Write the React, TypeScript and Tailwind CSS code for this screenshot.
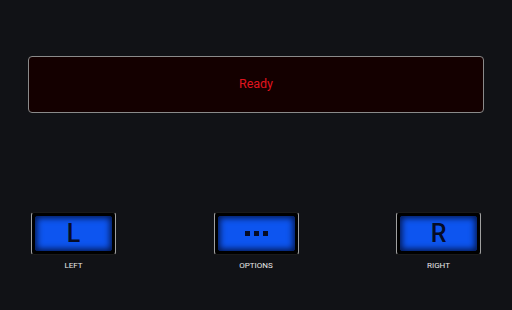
import React from "react";

function Btn({ label, children }: { label: string; children: React.ReactNode }) {
  return (
    <div className="flex flex-col items-center">
      <div className="w-[85px] h-[43px] p-[3px] bg-black rounded-[3px] border border-[#1a1a1a] border-x-[#a0a0a0]">
        <div className="w-full h-full rounded-[3px] bg-[#0d55f0] shadow-[inset_0_0_6px_2px_rgba(0,0,20,0.75)] flex items-center justify-center text-[#060c26] text-[25px] leading-none font-medium font-['Roboto',sans-serif]">
          {children}
        </div>
      </div>
      <div className="mt-[6px] text-[8px] leading-[10px] font-normal text-[#e8e8e8] font-['Roboto',sans-serif]">{label}</div>
    </div>
  );
}

export default function App() {
  return (
    <div className="w-[512px] h-[310px] bg-[#111216] px-[28px] pt-[56px] flex flex-col">
      <div className="h-[57px] rounded-[4px] border border-[#8a8a8a] bg-[#140000] flex items-center justify-center">
        <span className="text-[12.5px] text-[#e0141e] font-['Roboto',sans-serif]">Ready</span>
      </div>
      <div className="mt-[99px] px-[3px] flex justify-between">
        <Btn label="LEFT">L</Btn>
        <Btn label="OPTIONS">
          <div className="flex gap-[4px]">
            <span className="w-[5px] h-[5px] bg-[#060c26]" />
            <span className="w-[5px] h-[5px] bg-[#060c26]" />
            <span className="w-[5px] h-[5px] bg-[#060c26]" />
          </div>
        </Btn>
        <Btn label="RIGHT">R</Btn>
      </div>
    </div>
  );
}
